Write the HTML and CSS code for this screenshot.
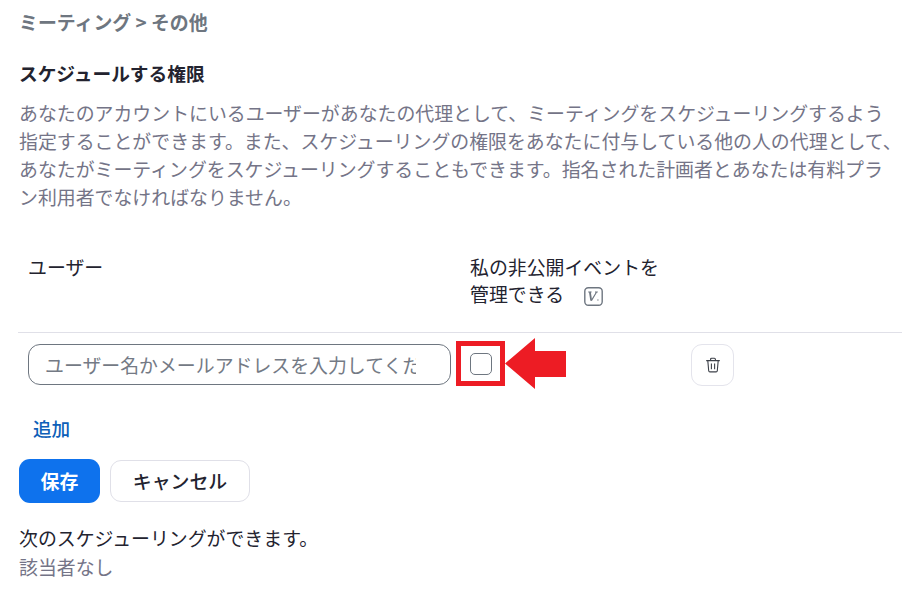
FILE: index.html
```html
<!DOCTYPE html>
<html lang="ja">
<head>
<meta charset="utf-8">
<title>スケジュールする権限</title>
<link rel="stylesheet" href="styles.css">
</head>
<body>
<main class="page">
  <div class="crumb">ミーティング &gt; その他</div>
  <h2 class="title">スケジュールする権限</h2>
  <p class="desc">あなたのアカウントにいるユーザーがあなたの代理として、ミーティングをスケジューリングするよう<br>指定することができます。また、スケジューリングの権限をあなたに付与している他の人の代理として、<br>あなたがミーティングをスケジューリングすることもできます。指名された計画者とあなたは有料プラ<br>ン利用者でなければなりません。</p>
  <div class="thead">
    <div class="th-user">ユーザー</div>
    <div class="th-private">私の非公開イベントを<br>管理できる
      <svg class="vicon" viewBox="0 0 19 19" width="19" height="19"><rect x="0.8" y="0.8" width="17.4" height="17.4" rx="3.5" fill="none" stroke="#6e7680" stroke-width="1.4"/><path d="M4.2 5h3.4M11 5h2.8M12.6 5 7.4 13.6M13.2 13h1.4" fill="none" stroke="#6e7680" stroke-width="1.1"/><path d="M5.9 5l1.3 8.6" fill="none" stroke="#6e7680" stroke-width="1.8"/></svg>
    </div>
  </div>
  <div class="row">
    <div class="input"><span class="placeholder">ユーザー名かメールアドレスを入力してください</span></div>
    <div class="check-cell">
      <span class="checkbox"></span>
      <span class="highlight"></span>
      <svg class="arrow" viewBox="0 0 61 51" width="61" height="51"><path d="M0 25.5 30 0V13H61V39H30V51Z" fill="#ed1c24"/></svg>
    </div>
    <button class="trash" type="button" aria-label="削除">
      <svg viewBox="0 0 16 16" width="16" height="16" fill="none" stroke="#3c4048" stroke-width="1.1"><path d="M1.2 3.6h13.6M5.6 3.4V2.2c0-.6.4-1 1-1h2.8c.6 0 1 .4 1 1v1.2M2.8 3.8l.9 10c.1.8.5 1.1 1.2 1.1h6.2c.7 0 1.1-.3 1.2-1.1l.9-10M6.4 6.4v5.8M9.6 6.4v5.8"/></svg>
    </button>
  </div>
  <a class="add">追加</a>
  <div class="actions">
    <button class="btn primary" type="button">保存</button>
    <button class="btn secondary" type="button">キャンセル</button>
  </div>
  <div class="next">次のスケジューリングができます。</div>
  <div class="none">該当者なし</div>
</main>
</body>
</html>
```
FILE: styles.css
```css
* { box-sizing: border-box; }
html, body { margin: 0; background: #fff; }
body {
  font-family: "Noto Sans CJK JP", "Noto Sans", sans-serif;
  font-size: 18.9px;
  color: #23232f;
}
.page { width: 913px; height: 604px; padding: 8px 0 0 19px; overflow: hidden; }
.crumb { font-size: 18.9px; font-weight: 700; line-height: 28px; color: #6e7680; }
.title { margin: 23px 0 0; font-size: 18.7px; font-weight: 700; line-height: 28px; color: #23232f; }
.desc { margin: 12px 0 0; width: 890px; line-height: 28px; color: #747487; font-size: 18.9px; }
.thead { display: flex; margin: 39px 0 0 -1px; width: 884px; height: 83px; border-bottom: 1px solid #e0e0e8; padding-left: 10px; font-size: 18.9px; line-height: 27px; color: #23232f; }
.th-user { width: 442px; padding-top: 3px; }
.th-private { padding-top: 3px; }
.vicon { vertical-align: 0; margin: -4px 0 -4px 16px; }
.row { display: flex; align-items: center; margin-top: 11px; padding-left: 9px; height: 42px; }
.input { align-self: flex-start; width: 423px; height: 41px; border: 1px solid #6e7680; border-radius: 12px; padding: 1px 34px 0 16px; overflow: hidden; white-space: nowrap; line-height: 38px; font-size: 18.9px; }
.placeholder { display: block; overflow: hidden; color: #747a85; }
.check-cell { position: relative; width: 240px; height: 42px; }
.checkbox { position: absolute; left: 19px; top: 9px; width: 22px; height: 22px; border: 1px solid #6e7680; border-radius: 5px; }
.highlight { position: absolute; left: 5px; top: -3px; width: 49px; height: 45px; border: 5px solid #ed1c24; }
.arrow { position: absolute; left: 54px; top: -6px; }
.trash { width: 43px; height: 42px; background: #fff; border: 1px solid #e4e4ec; border-radius: 11px; padding: 0; display: flex; align-items: center; justify-content: center; }
.add { display: block; margin: 28px 0 0 14px; font-size: 18.6px; font-weight: 500; line-height: 28px; color: #0e5fb8; }
.actions { display: flex; align-items: center; gap: 10px; margin-top: 17px; }
.btn { font-family: inherit; font-size: 18.9px; line-height: 26px; padding: 0; }
.primary { width: 81px; height: 44px; border: 0; border-radius: 11px; background: #0e72ed; color: #fff; font-weight: 700; }
.secondary { width: 140px; height: 42px; border: 1px solid #e0e0e8; border-radius: 11px; background: #fff; color: #23232f; font-weight: 500; }
.next { margin-top: 21px; font-size: 18.9px; line-height: 28px; color: #23232f; }
.none { font-size: 18.9px; line-height: 30px; color: #747487; }
```
